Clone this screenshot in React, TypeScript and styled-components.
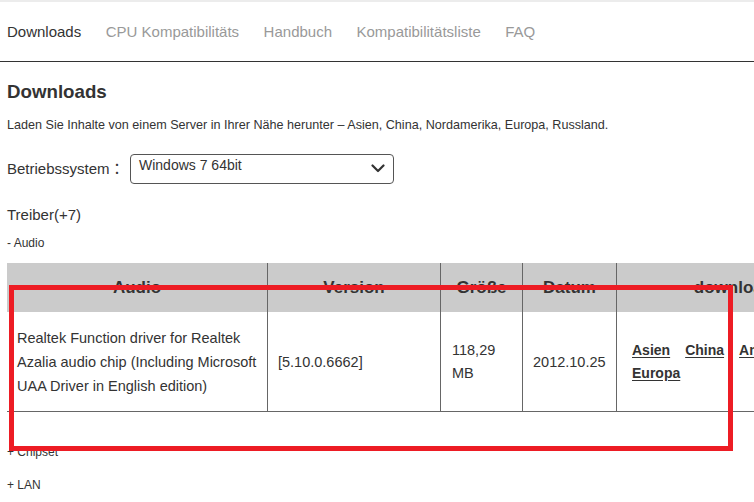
import React from "react";
import styled, { createGlobalStyle } from "styled-components";

const GlobalStyle = createGlobalStyle`
  html, body {
    margin: 0;
    padding: 0;
    overflow: hidden;
    background: #ffffff;
    font-family: "Liberation Sans", Arial, "Noto Sans CJK JP", sans-serif;
    color: #333333;
  }
`;

const Page = styled.div`
  width: 754px;
  min-height: 502px;
`;

const TopStrip = styled.div`
  height: 2px;
  background: #ececec;
`;

const Nav = styled.nav`
  height: 59px;
  display: flex;
  align-items: center;
  gap: 24.5px;
  padding-left: 7px;
  border-bottom: 1px solid #333333;
`;

const NavItem = styled.a<{ $active?: boolean }>`
  font-size: 15px;
  line-height: 20px;
  color: ${(p) => (p.$active ? "#333333" : "#999999")};
  text-decoration: none;
  white-space: nowrap;
`;

const Content = styled.main`
  padding-left: 7px;
  display: flex;
  flex-direction: column;
`;

const Heading = styled.h2`
  margin: 19px 0 0;
  font-size: 18.72px;
  line-height: 22px;
  font-weight: bold;
  color: #333333;
`;

const Lead = styled.p`
  margin: 12.5px 0 0;
  font-size: 12.6px;
  line-height: 18px;
  white-space: nowrap;
`;

const OsRow = styled.div`
  margin-top: 20.5px;
  display: flex;
  align-items: center;
  height: 30px;
`;

const OsLabel = styled.span`
  font-size: 15px;
  line-height: 20px;
  width: 123px;
  white-space: nowrap;
`;

const FakeSelect = styled.div`
  box-sizing: border-box;
  width: 264px;
  height: 30px;
  border: 1px solid #555555;
  border-radius: 4px;
  padding: 0 8px 0 8px;
  display: flex;
  align-items: flex-start;
  justify-content: space-between;
`;

const SelectValue = styled.span`
  font-size: 14px;
  line-height: 20px;
  color: #333333;
`;

const Chevron = styled.svg`
  margin-top: 9px;
`;

const SectionTitle = styled.div`
  margin-top: 20.5px;
  font-size: 15px;
  line-height: 20px;
`;

const Category = styled.div<{ $gap: number }>`
  margin-top: ${(p) => p.$gap}px;
  font-size: 12px;
  line-height: 16px;
`;

const TableWrap = styled.div`
  position: relative;
  margin-top: 12.8px;
`;

const Table = styled.table`
  border-collapse: separate;
  border-spacing: 0;
  table-layout: fixed;
  width: 843px;
`;

const HeadCell = styled.th`
  box-sizing: border-box;
  height: 49px;
  padding: 0;
  background: #cbcbcb;
  font-size: 17px;
  font-weight: bold;
  color: #333333;
  text-align: center;
  vertical-align: middle;
  &:not(:first-child) {
    border-left: 1px solid #666666;
  }
`;

const Cell = styled.td<{ $lh?: number; $pl?: number }>`
  padding: 14px 10px 13px ${(p) => p.$pl ?? 10}px;
  font-size: 14.5px;
  line-height: ${(p) => p.$lh ?? 24}px;
  color: #333333;
  vertical-align: middle;
  text-align: left;
  border-bottom: 1px solid #666666;
  &:not(:first-child) {
    border-left: 1px solid #666666;
  }
  &:first-child {
    padding-right: 6px;
  }
`;

const ServerLink = styled.a`
  display: inline;
  margin-right: 11px;
  font-size: 14px;
  font-weight: bold;
  color: #333333;
  text-decoration: underline;
  text-underline-offset: 2px;
  white-space: nowrap;
`;

const Highlight = styled.div`
  position: absolute;
  left: 2px;
  top: 22px;
  width: 724px;
  height: 166px;
  box-sizing: border-box;
  border: 5px solid #ed1c24;
  pointer-events: none;
`;

const navItems = [
  "Downloads",
  "CPU Kompatibilitäts",
  "Handbuch",
  "Kompatibilitätsliste",
  "FAQ",
];

const servers = ["Asien", "China", "Amerika", "Europa"];

export default function App() {
  return (
    <Page>
      <GlobalStyle />
      <TopStrip />
      <Nav>
        {navItems.map((n, i) => (
          <NavItem key={n} $active={i === 0}>
            {n}
          </NavItem>
        ))}
      </Nav>
      <Content>
        <Heading>Downloads</Heading>
        <Lead>
          Laden Sie Inhalte von einem Server in Ihrer Nähe herunter – Asien,
          China, Nordamerika, Europa, Russland.
        </Lead>
        <OsRow>
          <OsLabel>Betriebssystem：</OsLabel>
          <FakeSelect role="combobox">
            <SelectValue>Windows 7 64bit</SelectValue>
            <Chevron width="14" height="9" viewBox="0 0 14 9">
              <polyline
                points="1.5,1.5 7,7 12.5,1.5"
                fill="none"
                stroke="#333333"
                strokeWidth="2.2"
                strokeLinecap="round"
                strokeLinejoin="round"
              />
            </Chevron>
          </FakeSelect>
        </OsRow>
        <SectionTitle>Treiber(+7)</SectionTitle>
        <Category $gap={10}>- Audio</Category>
        <TableWrap>
          <Table>
            <colgroup>
              <col style={{ width: 260 }} />
              <col style={{ width: 173 }} />
              <col style={{ width: 82 }} />
              <col style={{ width: 94 }} />
              <col style={{ width: 234 }} />
            </colgroup>
            <thead>
              <tr>
                <HeadCell>Audio</HeadCell>
                <HeadCell>Version</HeadCell>
                <HeadCell>Größe</HeadCell>
                <HeadCell>Datum</HeadCell>
                <HeadCell>download</HeadCell>
              </tr>
            </thead>
            <tbody>
              <tr>
                <Cell>
                  Realtek Function driver for Realtek Azalia audio chip
                  (Including Microsoft UAA Driver in English edition)
                </Cell>
                <Cell>[5.10.0.6662]</Cell>
                <Cell $lh={23} $pl={11}>
                  118,29 MB
                </Cell>
                <Cell>2012.10.25</Cell>
                <Cell $lh={23} $pl={15}>
                  {servers.map((s) => (
                    <React.Fragment key={s}>
                      <ServerLink>{s}</ServerLink>{" "}
                    </React.Fragment>
                  ))}
                </Cell>
              </tr>
            </tbody>
          </Table>
          <Highlight />
        </TableWrap>
        <Category $gap={32.2}>+ Chipset</Category>
        <Category $gap={17}>+ LAN</Category>
      </Content>
    </Page>
  );
}
